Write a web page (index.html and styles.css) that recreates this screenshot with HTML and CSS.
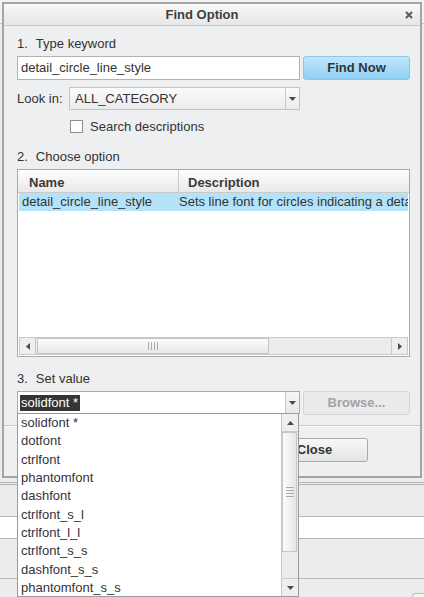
FILE: index.html
```html
<!DOCTYPE html>
<html lang="en">
<head>
  <meta charset="UTF-8">
  <title>Find Option</title>
  <link rel="stylesheet" href="styles.css">
</head>
<body>
  <div class="app">
    <div class="app-head"></div>
    <div class="app-main"></div>
    <div class="app-tabs"></div>
    <div class="app-field"></div>
    <div class="app-bar"></div>
    <div class="app-foot"><div class="app-btn"></div></div>
  </div>

  <div class="dialog">
    <div class="titlebar">
      <div class="title">Find Option</div>
      <div class="close">
        <svg width="8" height="8" viewBox="0 0 8 8"><path d="M1 1L7 7M7 1L1 7" stroke="#5a5a5a" stroke-width="2"/></svg>
      </div>
    </div>

    <div class="body">
      <div class="step"><span class="num">1.</span>Type keyword</div>
      <div class="row">
        <div class="input">detail_circle_line_style</div>
        <div class="btn btn-primary">Find Now</div>
      </div>

      <div class="lookin">
        <div class="lookin-label">Look in:</div>
        <div class="select">
          <div class="select-text">ALL_CATEGORY</div>
          <div class="select-arrow">
            <svg width="7" height="4" viewBox="0 0 7 4"><path d="M0 0H7L3.5 4Z" fill="#4a4a4a"/></svg>
          </div>
        </div>
      </div>

      <div class="check-row">
        <span class="checkbox"></span>
        <span>Search descriptions</span>
      </div>

      <div class="step step-2"><span class="num">2.</span>Choose option</div>
      <div class="grid">
        <div class="grid-head">
          <div class="col-name">Name</div>
          <div class="col-desc">Description</div>
        </div>
        <div class="grid-row selected">
          <div class="col-name">detail_circle_line_style</div>
          <div class="col-desc">Sets line font for circles indicating a detail view</div>
        </div>
        <div class="grid-fill"></div>
        <div class="hscroll">
          <div class="sbtn sbtn-left">
            <svg width="4" height="7" viewBox="0 0 4 7"><path d="M4 0V7L0 3.5Z" fill="#4a4a4a"/></svg>
          </div>
          <div class="hthumb">
            <svg width="11" height="8" viewBox="0 0 11 8"><path d="M0 0h1v8H0zM3 0h1v8H3zM6 0h1v8H6zM9 0h1v8H9z" fill="#acacac"/></svg>
          </div>
          <div class="htrack"></div>
          <div class="sbtn sbtn-right">
            <svg width="4" height="7" viewBox="0 0 4 7"><path d="M0 0V7L4 3.5Z" fill="#4a4a4a"/></svg>
          </div>
        </div>
      </div>

      <div class="step step-3"><span class="num">3.</span>Set value</div>
      <div class="row row-value">
        <div class="select combo">
          <div class="select-text"><span class="picked">solidfont *</span></div>
          <div class="select-arrow">
            <svg width="7" height="4" viewBox="0 0 7 4"><path d="M0 0H7L3.5 4Z" fill="#4a4a4a"/></svg>
          </div>
        </div>
        <div class="btn btn-disabled">Browse...</div>
      </div>

      <div class="separator"></div>

      <div class="buttons">
        <div class="btn btn-close">Close</div>
      </div>
    </div>
  </div>

  <div class="dropdown">
    <ul class="options">
      <li>solidfont *</li>
      <li>dotfont</li>
      <li>ctrlfont</li>
      <li>phantomfont</li>
      <li>dashfont</li>
      <li>ctrlfont_s_l</li>
      <li>ctrlfont_l_l</li>
      <li>ctrlfont_s_s</li>
      <li>dashfont_s_s</li>
      <li>phantomfont_s_s</li>
    </ul>
    <div class="vscroll">
      <div class="vbtn vbtn-up">
        <svg width="7" height="4" viewBox="0 0 7 4"><path d="M0 4H7L3.5 0Z" fill="#4a4a4a"/></svg>
      </div>
      <div class="vthumb">
        <svg width="8" height="11" viewBox="0 0 8 11"><path d="M0 0h8v1H0zM0 3h8v1H0zM0 6h8v1H0zM0 9h8v1H0z" fill="#acacac"/></svg>
      </div>
      <div class="vtrack"></div>
      <div class="vbtn vbtn-down">
        <svg width="7" height="4" viewBox="0 0 7 4"><path d="M0 0H7L3.5 4Z" fill="#4a4a4a"/></svg>
      </div>
    </div>
  </div>
</body>
</html>
```

FILE: styles.css
```css
* {
  box-sizing: border-box;
}
body {
  margin: 0;
  width: 424px;
  height: 597px;
  overflow: hidden;
  position: relative;
  font-family: "Liberation Sans", Arial, sans-serif;
  font-size: 13px;
  color: #333;
  background: #e6e7e9;
}

/* application behind the dialog */
.app {
  height: 597px;
  display: flex;
  flex-direction: column;
}
.app-head {
  height: 24px;
  background: #f2f2f2;
  border-bottom: 1px solid #c8c8c8;
}
.app-main {
  flex: 1;
  background: #ececed;
}
.app-tabs {
  height: 34px;
  border-top: 3px double #b5b5b5;
  background: #ececed;
}
.app-field {
  height: 23px;
  border-top: 1px solid #b9b9b9;
  border-bottom: 1px solid #b9b9b9;
  background: #fff;
}
.app-bar {
  height: 40px;
  background: #ececed;
  border-bottom: 1px solid #b9b9b9;
}
.app-foot {
  height: 18px;
  background: #ececed;
  display: flex;
  justify-content: flex-end;
  align-items: flex-end;
}
.app-btn {
  width: 12px;
  height: 4px;
  border: 1px solid #bdbdbd;
  border-right: 0;
  border-bottom: 0;
  border-radius: 3px 0 0 0;
  background: #f5f5f5;
}

/* dialog */
.dialog {
  position: absolute;
  left: 2px;
  top: 2px;
  width: 420px;
  height: 476px;
  border: 2px solid #a3a4a6;
  background: #eeeff0;
  display: flex;
  flex-direction: column;
}
.titlebar {
  height: 22px;
  display: flex;
  align-items: center;
  background: linear-gradient(#f8f8f8, #e6e7e8);
  border-bottom: 1px solid #c4c5c7;
}
.title {
  flex: 1;
  text-align: center;
  font-weight: bold;
  color: #3d3d3d;
  padding-left: 2px;
}
.close {
  width: 22px;
  display: flex;
  justify-content: flex-end;
  padding-right: 7px;
}
.close svg {
  display: block;
}
.body {
  flex: 1;
  display: flex;
  flex-direction: column;
  padding: 0 10px 0 13px;
}
.step {
  line-height: 16px;
  margin-top: 10px;
}
.num {
  margin-right: 8px;
}
.step-2 {
  margin-top: 16px;
}
.step-3 {
  margin-top: 14px;
}

.row {
  display: grid;
  grid-template-columns: 283px 107px;
  column-gap: 3px;
  margin-top: 4px;
  height: 24px;
}
.input {
  height: 24px;
  border: 1px solid #b2b2b2;
  background: #fff;
  line-height: 22px;
  padding-left: 3px;
}
.btn {
  height: 24px;
  border-radius: 3px;
  font-weight: bold;
  text-align: center;
  line-height: 22px;
}
.btn-primary {
  border: 1px solid #8cc6ea;
  background: linear-gradient(#c2e6fc, #8fd0f6);
  color: #333;
}
.btn-disabled {
  border: 1px solid #d3d4d6;
  background: #ebebec;
  color: #a2a2a2;
}
.btn-close {
  width: 107px;
  margin-right: 42px;
  border: 1px solid #a9a9a9;
  background: linear-gradient(#f8f8f8, #e4e4e4);
  color: #333;
}

.lookin {
  display: grid;
  grid-template-columns: 52px 231px;
  margin-top: 7px;
  height: 23px;
  align-items: center;
}
.select {
  height: 23px;
  display: flex;
  border: 1px solid #c3c3c3;
  background: linear-gradient(#fbfbfb, #ebebec);
}
.select-text {
  flex: 1;
  line-height: 21px;
  padding-left: 5px;
  white-space: nowrap;
}
.select-arrow {
  width: 14px;
  border-left: 1px solid #c8c8c8;
  display: flex;
  align-items: center;
  justify-content: center;
}
.select-arrow svg {
  display: block;
}

.check-row {
  margin-top: 10px;
  height: 13px;
  display: flex;
  align-items: center;
  padding-left: 53px;
}
.checkbox {
  width: 13px;
  height: 13px;
  border: 1px solid #8d8d8d;
  background: #fff;
  margin-right: 7px;
}

/* option table */
.grid {
  margin-top: 4px;
  height: 188px;
  border: 1px solid #a9a9a9;
  background: #fff;
  display: flex;
  flex-direction: column;
}
.grid-head {
  height: 23px;
  display: grid;
  grid-template-columns: 161px 1fr;
  background: linear-gradient(#fefefe, #e9e9ea);
  border-bottom: 1px solid #cacaca;
  font-weight: bold;
  color: #3a3a3a;
}
.grid-head .col-name {
  border-right: 1px solid #cacaca;
  padding: 3px 0 0 11px;
  line-height: 19px;
}
.grid-head .col-desc {
  padding: 3px 0 0 9px;
  line-height: 19px;
}
.grid-row {
  height: 18px;
  display: grid;
  grid-template-columns: 160px 1fr;
  line-height: 18px;
  margin: 0 1px;
}
.grid-row.selected {
  background: #b4e2f8;
}
.grid-row .col-name {
  padding-left: 3px;
  white-space: nowrap;
}
.grid-row .col-desc {
  white-space: nowrap;
  overflow: hidden;
}
.grid-fill {
  flex: 1;
}
.hscroll {
  height: 18px;
  margin: 0 1px 1px;
  display: flex;
  border: 1px solid #c9c9c9;
  background: #ececed;
}
.sbtn {
  width: 16px;
  display: flex;
  align-items: center;
  justify-content: center;
  background: #eeeeef;
}
.sbtn svg {
  display: block;
}
.sbtn-left {
  border-right: 1px solid #c9c9c9;
}
.sbtn-right {
  border-left: 1px solid #c9c9c9;
}
.hthumb {
  width: 232px;
  margin-left: 1px;
  border: 1px solid #c6c6c6;
  background: linear-gradient(#fdfdfd, #e8e8e9);
  display: flex;
  align-items: center;
  justify-content: center;
}
.hthumb svg {
  display: block;
}
.htrack {
  flex: 1;
}

.row-value {
  height: 24px;
  align-items: start;
}
.combo {
  border-color: #acacac;
  background: #fff;
}
.combo .select-arrow {
  background: linear-gradient(#f6f6f6, #e8e8e9);
}
.combo .select-text {
  padding-left: 2px;
}
.picked {
  background: #353535;
  color: #fff;
  padding: 0 2px 0 1px;
  display: inline-block;
  line-height: 16px;
}

.separator {
  margin: 10px -10px 0 -13px;
  border-top: 1px solid #c9cacc;
  border-bottom: 1px solid #f8f8f9;
}
.buttons {
  margin-top: 11px;
  display: flex;
  justify-content: flex-end;
}

/* open value list */
.dropdown {
  position: absolute;
  left: 17px;
  top: 413px;
  width: 282px;
  height: 184px;
  border: 1px solid #9b9b9b;
  background: #fff;
  display: flex;
}
.options {
  flex: 1;
  list-style: none;
  margin: 0;
  padding: 0;
}
.options li {
  line-height: 18.33px;
  padding-left: 3px;
  color: #33333d;
}
.vscroll {
  width: 17px;
  border-left: 1px solid #c9c9c9;
  background: #ececed;
  display: flex;
  flex-direction: column;
}
.vbtn {
  height: 18px;
  display: flex;
  align-items: center;
  justify-content: center;
  background: #eeeeef;
}
.vbtn svg {
  display: block;
}
.vbtn-up {
  border-bottom: 1px solid #c9c9c9;
}
.vbtn-down {
  border-top: 1px solid #c9c9c9;
}
.vthumb {
  height: 120px;
  margin: 0 1px 0 0;
  border: 1px solid #c6c6c6;
  background: linear-gradient(90deg, #fdfdfd, #e6e6e7);
  display: flex;
  align-items: center;
  justify-content: center;
}
.vthumb svg {
  display: block;
}
.vtrack {
  flex: 1;
}
```
